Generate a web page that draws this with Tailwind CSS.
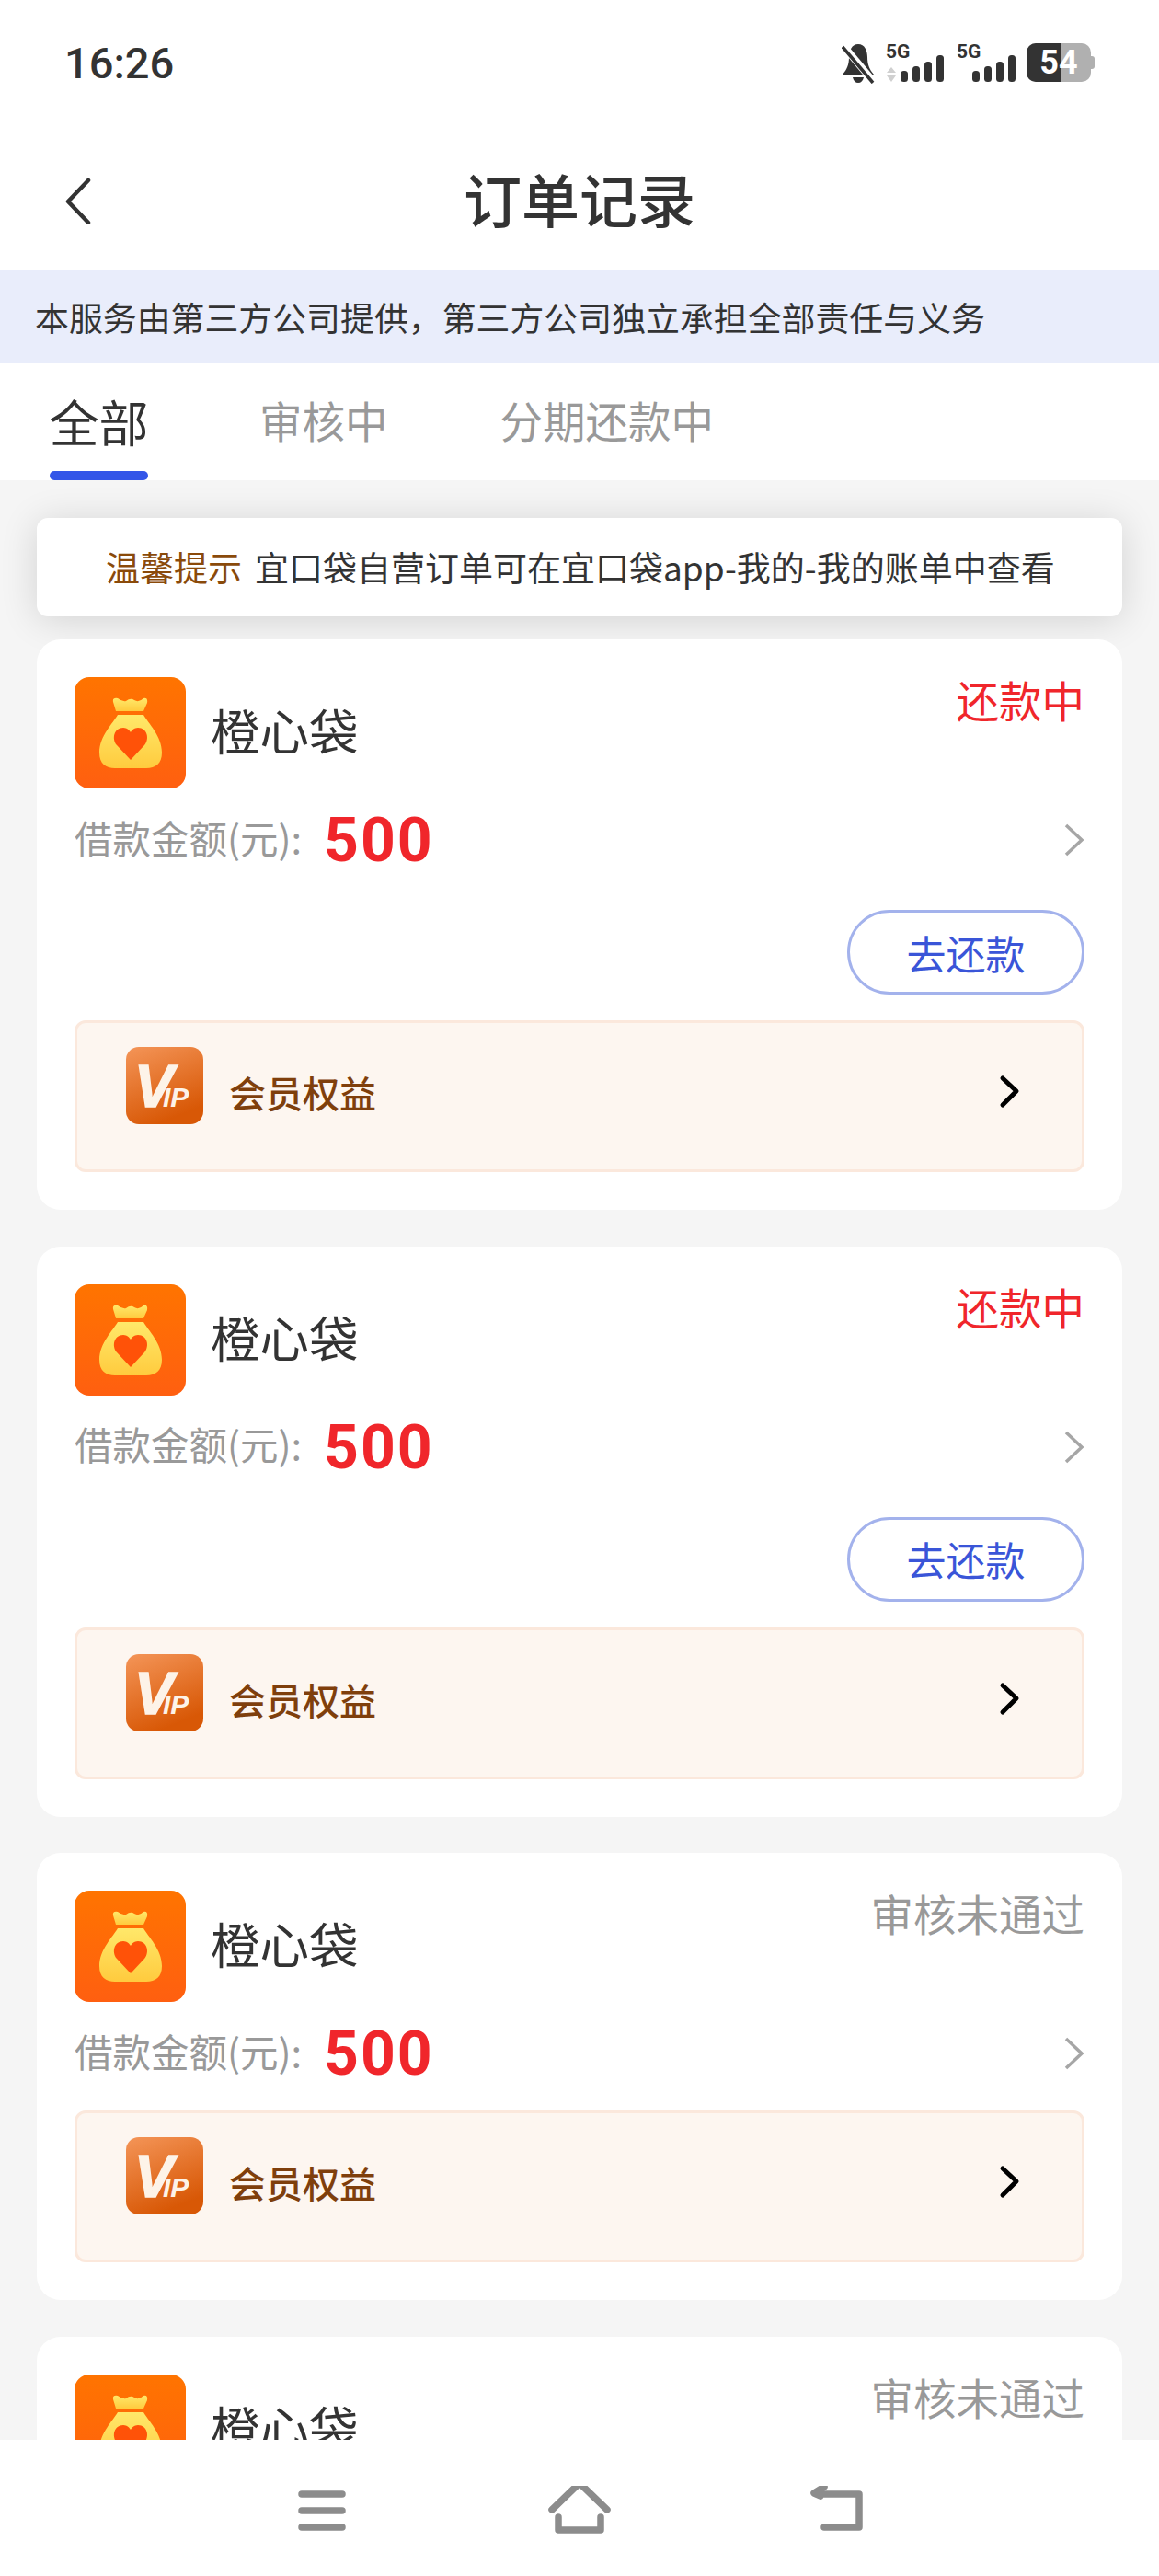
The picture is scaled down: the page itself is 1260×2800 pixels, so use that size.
<!DOCTYPE html>
<html lang="zh">
<head>
    <meta charset="UTF-8">
    <meta name="viewport" content="width=device-width, initial-scale=1.0">
    <title>订单记录</title>
    <script src="https://cdn.jsdelivr.net/npm/@tailwindcss/browser@4"></script>
</head>
<body class="bg-[#f5f5f5] text-[#333333] font-['Noto_Sans_CJK_SC',sans-serif]">
    <svg class="absolute w-0 h-0">
        <defs>
            <linearGradient id="bagBg" x1="0" y1="0" x2="0" y2="1"><stop offset="0" stop-color="#ff7400"/><stop offset="1" stop-color="#ff5f10"/></linearGradient>
            <linearGradient id="bagFill" x1="0" y1="0" x2="0" y2="1"><stop offset="0" stop-color="#ffe86a"/><stop offset="1" stop-color="#ffcb3e"/></linearGradient>
            <linearGradient id="vipBg" x1="0" y1="0" x2="0.4" y2="1"><stop offset="0" stop-color="#f49558"/><stop offset="1" stop-color="#d85806"/></linearGradient>
        </defs>
    </svg>

    <div id="page" class="relative w-[1260px] h-[2800px] overflow-hidden">
        <div class="bg-white h-[294px]">
            <!-- status bar -->
            <div class="h-[136px] pl-[70px] pr-[70px] flex justify-between items-start">
                <span class="mt-[37px] text-[47px] leading-[64px] font-medium font-['Roboto',sans-serif]">16:26</span>
                <div class="mt-[47px] flex items-start">
                    <svg class="w-[36px] h-[44px]" viewBox="0 0 36 44">
                        <path d="M18 1c7 0 10 7 10 14 0 8 2 13 7 19H1c5-6 7-11 7-19C8 8 11 1 18 1z" fill="#333"/>
                        <path d="M12 37h12c-1 4-3 6-6 6s-5-2-6-6z" fill="#333"/>
                        <path d="M2 3l32 38" stroke="#fff" stroke-width="8"/>
                        <path d="M1 4l33 39" stroke="#333" stroke-width="3.5"/>
                    </svg>
                    <svg class="ml-[12px] w-[64px] h-[44px] overflow-visible" viewBox="0 0 64 44">
                        <text x="0" y="16" font-family="Roboto" font-weight="700" font-size="21" fill="#333">5G</text>
                        <path d="M6 26l5 6H1zM6 42l5-7H1z" fill="#d0d0d0"/>
                        <rect x="16" y="30" width="8" height="12" rx="3.5" fill="#333"/>
                        <rect x="29" y="25" width="8" height="17" rx="3.5" fill="#333"/>
                        <rect x="42" y="20" width="8" height="22" rx="3.5" fill="#333"/>
                        <rect x="55" y="13" width="8" height="29" rx="3.5" fill="#333"/>
                    </svg>
                    <svg class="ml-[13px] w-[64px] h-[44px] overflow-visible" viewBox="0 0 64 44">
                        <text x="0" y="16" font-family="Roboto" font-weight="700" font-size="21" fill="#333">5G</text>
                        <rect x="17" y="30" width="8" height="12" rx="3.5" fill="#333"/>
                        <rect x="30" y="25" width="8" height="17" rx="3.5" fill="#333"/>
                        <rect x="43" y="20" width="8" height="22" rx="3.5" fill="#333"/>
                        <rect x="56" y="13" width="8" height="29" rx="3.5" fill="#333"/>
                    </svg>
                    <div class="relative ml-[12px] w-[74px] h-[42px]">
                        <div class="absolute right-0 top-[14px] w-[6px] h-[14px] rounded-r-[3px] bg-[#b0b0b0]"></div>
                        <div class="absolute left-0 top-0 w-[70px] h-[42px] rounded-[10px] bg-[#b0b0b0] overflow-hidden">
                            <div class="w-[37px] h-full bg-[#333333]"></div>
                        </div>
                        <span class="absolute left-0 top-0 w-[70px] h-[42px] flex items-center justify-center text-white text-[36px] leading-[42px] font-bold font-['Roboto',sans-serif]">54</span>
                    </div>
                </div>
            </div>
            <!-- title bar -->
            <div class="relative h-[158px] flex items-center justify-center">
                <svg class="absolute left-[70px] top-[58px] w-[30px] h-[50px]" viewBox="0 0 30 50">
                    <path d="M26 2L4 25l22 23" fill="none" stroke="#333" stroke-width="4.5" stroke-linecap="round" stroke-linejoin="round"/>
                </svg>
                <h1 class="text-[63px] leading-[80px] font-medium text-[#333333]">订单记录</h1>
            </div>
        </div>

        <div class="h-[101px] bg-[#e9edfb] pl-[38px] flex items-center text-[36.9px] text-[#333333] whitespace-nowrap">本服务由第三方公司提供，第三方公司独立承担全部责任与义务</div>

        <div class="h-[127px] bg-white pl-[54px] flex items-start whitespace-nowrap">
            <div class="w-[107px] flex flex-col items-center">
                <span class="mt-[25px] text-[54px] leading-[76px] text-[#333333]">全部</span>
                <span class="mt-[16px] w-[107px] h-[10px] rounded-full bg-[#3355e8]"></span>
            </div>
            <span class="ml-[121px] mt-[28px] text-[46.5px] leading-[66px] text-[#999999]">审核中</span>
            <span class="ml-[122px] mt-[28px] text-[46.5px] leading-[66px] text-[#999999]">分期还款中</span>
        </div>

        <div class="px-[40px] pt-[41px]">
            <div class="h-[107px] rounded-[12px] bg-white shadow-[0_4px_40px_rgba(0,0,0,0.14)] flex items-center pl-[75px] text-[37px] whitespace-nowrap">
                <span class="text-[#8a4a0a]">温馨提示</span>
                <span class="ml-[14px] text-[#333333]">宜口袋自营订单可在宜口袋app-我的-我的账单中查看</span>
            </div>
            <div id="order-list" class="mt-[25px] flex flex-col gap-[39.5px]"></div>
        </div>

        <!-- bottom nav -->
        <div class="absolute left-0 right-0 bottom-0 h-[148px] bg-white">
            <svg class="absolute left-[320px] top-[50px] w-[620px] h-[60px]" viewBox="0 0 620 60" fill="none" stroke="#8c8c8c" stroke-width="7.5" stroke-linecap="round" stroke-linejoin="round">
                <path d="M8 9h44M8 27h44M8 45h44"/>
                <path d="M280 26l30-29 30 29M287 34v14h46V34"/>
                <path d="M568 9h46v36h-38M576 1l-11 7 7 3"/>
            </svg>
        </div>
    </div>

    <script>
        const orders = [
            { status: "还款中", statusClass: "text-[#f0262b]", repay: true },
            { status: "还款中", statusClass: "text-[#f0262b]", repay: true },
            { status: "审核未通过", statusClass: "text-[#999999]", repay: false },
            { status: "审核未通过", statusClass: "text-[#999999]", repay: false }
        ];

        const repayButton = `
            <div class="mt-[40px] flex justify-end">
                <span class="w-[258px] h-[92px] rounded-full border-[3px] border-[#a3b2ec] flex items-center justify-center text-[43px] text-[#3a55d8]">去还款</span>
            </div>`;

        document.getElementById("order-list").innerHTML = orders.map(order => `
            <div class="rounded-[26px] bg-white px-[41px] pt-[41px] pb-[41px]">
                <div class="flex items-start">
                    <svg class="w-[121px] h-[121px] rounded-[16px]" viewBox="0 0 121 121">
                        <rect width="121" height="121" fill="url(#bagBg)"/>
                        <path d="M45 37L42 27Q41 22 47 23Q52 27 56 26Q61 22 65 25Q70 28 75 23Q80 22 79 28L75 37Z" fill="url(#bagFill)"/>
                        <path d="M47 41H75C80 50 95 64 95 82C95 94 88 99 78 99H44C34 99 27 94 27 82C27 64 42 50 47 41Z" fill="url(#bagFill)"/>
                        <path d="M61 90L46 74C40 67 43 55 53 55C57 55 60 58 61 60C62 58 65 55 69 55C79 55 82 67 76 74Z" fill="#ff5208"/>
                    </svg>
                    <span class="ml-[27px] mt-[19px] text-[53.5px] leading-[76px] text-[#333333] whitespace-nowrap">橙心袋</span>
                    <span class="ml-auto -mt-[9px] text-[46.5px] leading-[66px] whitespace-nowrap ${order.statusClass}">${order.status}</span>
                </div>
                <div class="mt-[20px] h-[72px] flex items-center whitespace-nowrap">
                    <span class="mb-[6px] text-[41.5px] text-[#999999]">借款金额(元):</span>
                    <span class="ml-[24px] mt-[2px] text-[66px] leading-[72px] font-bold font-['Roboto',sans-serif] tracking-[2px] text-[#f0262b]">500</span>
                    <svg class="ml-auto w-[22px] h-[36px]" viewBox="0 0 22 36">
                        <path d="M2 2l17 16L2 34" fill="none" stroke="#a6a6a6" stroke-width="3.5"/>
                    </svg>
                </div>
                ${order.repay ? repayButton : ""}
                <div class="${order.repay ? "mt-[28px]" : "mt-[26px]"} relative h-[165px] rounded-[12px] border-[3px] border-[#fbe8dc] bg-[#fdf6f0]">
                    <svg class="absolute left-[53px] top-[26px] w-[84px] h-[84px] rounded-[14px]" viewBox="0 0 84 84">
                        <rect width="84" height="84" fill="url(#vipBg)"/>
                        <text x="9" y="65" font-family="Liberation Sans" font-weight="700" font-style="italic" font-size="64" fill="#fdf3e8" stroke="#fdf3e8" stroke-width="1.5">V</text>
                        <text x="40" y="65" font-family="Liberation Sans" font-weight="700" font-style="italic" font-size="30" fill="#fdf3e8">IP</text>
                    </svg>
                    <span class="absolute left-[165px] top-[47px] text-[40px] leading-[56px] font-medium text-[#7f3f0c] whitespace-nowrap">会员权益</span>
                    <svg class="absolute left-[1001px] top-[56px] w-[26px] h-[38px]" viewBox="0 0 26 38">
                        <path d="M5 4l15 14L5 33" fill="none" stroke="#000" stroke-width="5" stroke-linecap="round" stroke-linejoin="round"/>
                    </svg>
                </div>
            </div>`).join("");
    </script>
</body>
</html>
